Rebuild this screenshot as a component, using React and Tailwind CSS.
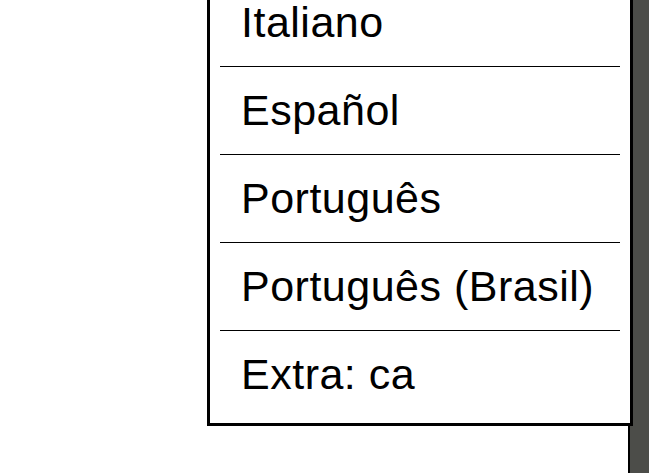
const languages = [
  "Italiano",
  "Español",
  "Português",
  "Português (Brasil)",
  "Extra: ca",
];

export default function App() {
  return (
    <div className="relative flex h-[473px] w-[649px] overflow-hidden bg-white" style={{ fontFamily: '"Liberation Sans", Arial, sans-serif' }}>
      <div className="flex-1" />
      <div className="w-[21px] border-l-2 border-black bg-[#4c4d49]" />

      {/* dropdown menu, scrolled so only the last entries show */}
      <div className="absolute bottom-[47px] left-[207px] w-[426px] border-[3px] border-black bg-white pb-[5px]">
        <ul>
          {languages.map((lang, i) => (
            <li key={lang} className="px-[10px]">
              <div className={i < languages.length - 1 ? "border-b border-black" : ""}>
                <div className="py-[19px] pl-[21px] text-[43px] leading-[49px] tracking-[0.5px] text-black">{lang}</div>
              </div>
            </li>
          ))}
        </ul>
      </div>
    </div>
  );
}
